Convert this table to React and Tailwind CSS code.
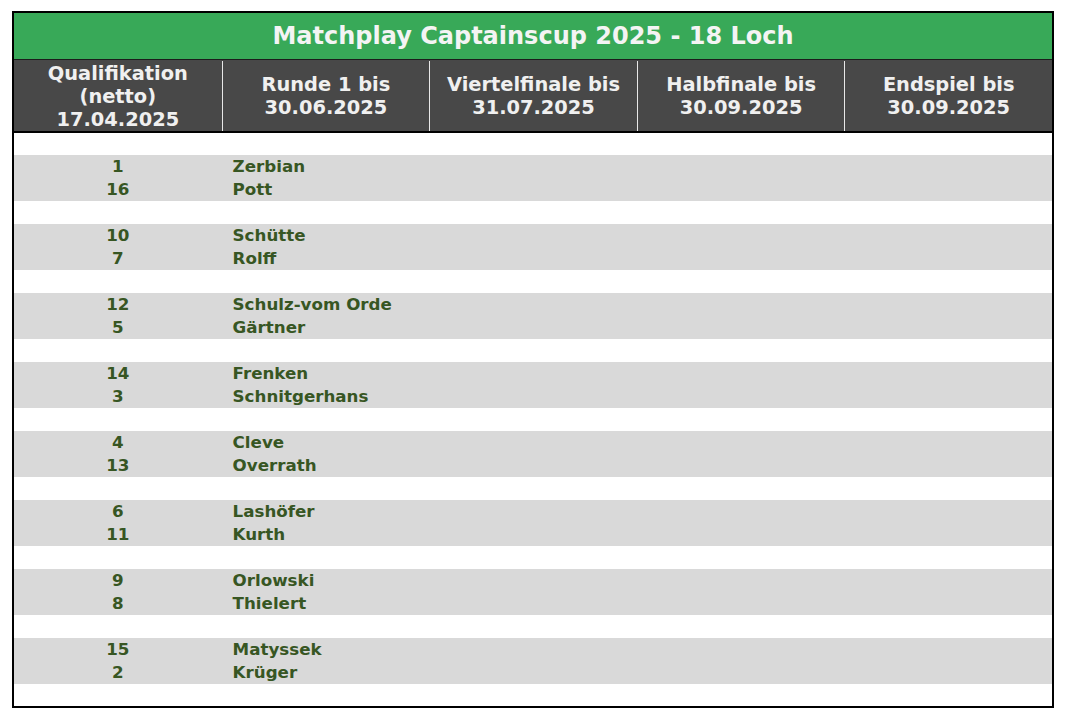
import React from 'react';

const pairs = [
    [['1', 'Zerbian'], ['16', 'Pott']],
    [['10', 'Schütte'], ['7', 'Rolff']],
    [['12', 'Schulz-vom Orde'], ['5', 'Gärtner']],
    [['14', 'Frenken'], ['3', 'Schnitgerhans']],
    [['4', 'Cleve'], ['13', 'Overrath']],
    [['6', 'Lashöfer'], ['11', 'Kurth']],
    [['9', 'Orlowski'], ['8', 'Thielert']],
    [['15', 'Matyssek'], ['2', 'Krüger']],
];

const headers = [
    ['Qualifikation', '(netto)', '17.04.2025'],
    ['Runde 1 bis', '30.06.2025'],
    ['Viertelfinale bis', '31.07.2025'],
    ['Halbfinale bis', '30.09.2025'],
    ['Endspiel bis', '30.09.2025'],
];

const Row = ({ seed, name }) => (
    <div className="grid grid-cols-5 h-[23px] bg-[#d9d9d9] items-center">
        <div className="text-center">{seed}</div>
        <div className="pl-[11px] whitespace-nowrap">{name}</div>
        <div />
        <div />
        <div />
    </div>
);

export default function App() {
    return (
        <div className="min-h-screen bg-white pt-[11px] pl-[12px]" style={{ fontFamily: '"DejaVu Sans", Verdana, sans-serif' }}>
            <div className="w-[1042px] border-2 border-black bg-white font-bold">
                {/* Title */}
                <div className="h-[47px] bg-[#38a958] border-b border-[#1c1c1c] flex items-center justify-center text-[24px] text-[#f4f4f4]">
                    Matchplay Captainscup 2025 - 18 Loch
                </div>

                {/* Column headers */}
                <div className="grid grid-cols-5 h-[73px] pt-[1px] bg-[#484848] border-b-2 border-black text-[#f0f0f0] text-[19.4px] leading-[23px]">
                    {headers.map((lines, i) => (
                        <div key={i} className={`flex flex-col items-center justify-center text-center ${i > 0 ? 'border-l border-[#e8e8e8]' : ''}`}>
                            {lines.map((l) => (
                                <span key={l}>{l}</span>
                            ))}
                        </div>
                    ))}
                </div>

                {/* Pairings */}
                <div className="text-[#375623] text-[16.7px] leading-[23px]">
                    <div className="h-[22px]" />
                    {pairs.map((pair, i) => (
                        <div key={i}>
                            <Row seed={pair[0][0]} name={pair[0][1]} />
                            <Row seed={pair[1][0]} name={pair[1][1]} />
                            <div className={i === pairs.length - 1 ? 'h-[22px]' : 'h-[23px]'} />
                        </div>
                    ))}
                </div>
            </div>
        </div>
    );
}
